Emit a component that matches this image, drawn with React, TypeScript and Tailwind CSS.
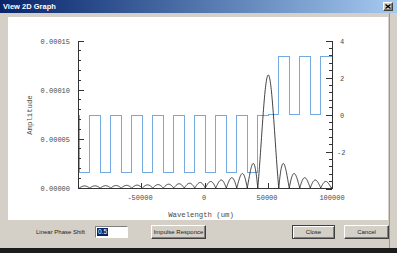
import React from "react";

// chart coords are the screenshot's pixel coords; the svg viewBox starts at the panel's corner
const X0 = 78;
const X1 = 332;
const Y_TOP = 41;
const Y_BASE = 188;

const bluePath = () => {
  const levelY = (s: number) => {
    if (s >= 18) return s % 2 === 0 ? 114 : 56;
    return s % 2 === 0 ? 172 : 115;
  };
  let d = `M ${X0} ${levelY(-1)}`;
  for (let k = 0; k <= 23; k++) {
    const x = 79 + 10.5 * k;
    d += ` L ${x} ${levelY(k - 1)} L ${x} ${levelY(k)}`;
  }
  d += ` L ${X1} ${levelY(23)}`;
  return d;
};

const sincPath = () => {
  const pts: string[] = [];
  for (let x = X0 + 0.5; x <= X1; x += 0.25) {
    const u = (x - 268.25) / 10.5;
    const s = Math.abs(u) < 1e-6 ? 1 : Math.sin(Math.PI * u) / (Math.PI * u);
    const y = Y_BASE - 113 * Math.abs(s);
    pts.push(`${x.toFixed(2)} ${y.toFixed(2)}`);
  }
  return "M " + pts.join(" L ");
};

const leftTicks = () => {
  const out: React.ReactNode[] = [];
  for (let i = 0; i <= 15; i++) {
    const y = Y_BASE - i * 9.8;
    const major = i % 5 === 0;
    out.push(
      <line key={"l" + i} x1={X0} x2={X0 + (major ? 6 : 3)} y1={y} y2={y} stroke="#333" strokeWidth={1} />
    );
  }
  return out;
};

const rightTicks = () => {
  const out: React.ReactNode[] = [];
  for (let i = 0; i <= 20; i++) {
    const y = 189 - i * 7.4;
    const major = i % 5 === 0;
    out.push(
      <line key={"r" + i} x1={X1} x2={X1 - (major ? 6 : 3)} y1={y} y2={y} stroke="#333" strokeWidth={1} />
    );
  }
  return out;
};

const bottomTicks = () => {
  const out: React.ReactNode[] = [];
  for (let i = 0; i <= 4; i++) {
    const x = X0 + i * 63.5;
    out.push(<line key={"b" + i} x1={x} x2={x} y1={Y_BASE} y2={Y_BASE - 5} stroke="#333" strokeWidth={1} />);
  }
  return out;
};

function Chart() {
  const mono = { fontFamily: "'Liberation Mono', 'DejaVu Sans Mono', monospace" };
  return (
    <svg width={380} height={203} viewBox="8 17 380 203" className="block" shapeRendering="crispEdges">
      <g style={mono} fontSize={7} fill="#4a4a4a">
        <text x={70} y={43.5} textAnchor="end">0.00015</text>
        <text x={70} y={92.5} textAnchor="end">0.00010</text>
        <text x={70} y={141.5} textAnchor="end">0.00005</text>
        <text x={70} y={190.5} textAnchor="end">0.00000</text>

        <text x={340} y={43.5}>4</text>
        <text x={340} y={80.5}>2</text>
        <text x={340} y={117.5}>0</text>
        <text x={337} y={154.5}>-2</text>

        <text x={140} y={199.5} textAnchor="middle">-50000</text>
        <text x={204} y={199.5} textAnchor="middle">0</text>
        <text x={267} y={199.5} textAnchor="middle">50000</text>
        <text x={332} y={199.5} textAnchor="middle">100000</text>

        <text x={201} y={216.5} textAnchor="middle" fontSize={7.3}>Wavelength (um)</text>
        <text x={0} y={0} textAnchor="middle" fontSize={7.3} transform="translate(32 115) rotate(-90)">
          Amplitude
        </text>
      </g>

      <path d={bluePath()} fill="none" stroke="#74aae0" strokeWidth={1} />
      <path d={sincPath()} fill="none" stroke="#111" strokeWidth={0.8} shapeRendering="geometricPrecision" />

      <line x1={X0} x2={X0} y1={Y_TOP} y2={Y_BASE} stroke="#333" />
      <line x1={X1} x2={X1} y1={Y_TOP} y2={189} stroke="#333" />
      <line x1={X0} x2={X1} y1={Y_BASE} y2={Y_BASE} stroke="#333" />
      {leftTicks()}
      {rightTicks()}
      {bottomTicks()}
    </svg>
  );
}

const raised =
  "bg-[#d4d0c8] border border-t-white border-l-white border-r-[#404040] border-b-[#404040] shadow-[inset_-1px_-1px_0_#808080]";

export default function App() {
  const ui = { fontFamily: "'Liberation Sans', Arial, sans-serif" };
  return (
    <div className="w-[397px] h-[253px] flex flex-col bg-[#d4d0c8] overflow-hidden" style={ui}>
      <div className="h-[13px] flex items-center justify-between pl-[3px] pr-[4px] bg-gradient-to-r from-[#0a246a] to-[#a6caf0]">
        <span className="text-white font-bold text-[7.5px] leading-none">View 2D Graph</span>
        <div className={"w-[10px] h-[9px] flex items-center justify-center " + raised}>
          <svg width={6} height={5} viewBox="0 0 6 5">
            <path d="M0.5 0.5 L5.5 4.5 M5.5 0.5 L0.5 4.5" stroke="#000" strokeWidth={1.3} />
          </svg>
        </div>
      </div>

      <div className="flex flex-1">
        <div className="w-[390px] flex flex-col border-r border-[#9c9890]">
          <div className="pl-[8px] pt-[4px]">
            <div className="w-[380px] h-[203px] bg-white">
              <Chart />
            </div>
          </div>

          <div className="mt-[5px] h-[14px] flex items-center text-[6px] text-[#222]">
            <span className="ml-[36px] w-[59px]">Linear Phase Shift</span>
            <div className="w-[33px] h-[12px] bg-white border border-t-[#808080] border-l-[#808080] border-r-white border-b-white flex items-center pl-[1px]">
              <span className="bg-[#0a246a] text-white text-[6.5px] leading-none px-[1px] py-[1px]">0.5</span>
            </div>
            <button className={"ml-[23px] w-[55px] h-[14px] flex items-center justify-center text-[6px] " + raised}>
              Impulse Responce
            </button>
            <button className="ml-[86px] w-[43px] h-[14px] flex items-center justify-center text-[6px] bg-[#d4d0c8] border border-[#404040] shadow-[inset_1px_1px_0_white,inset_-1px_-1px_0_#808080]">
              Close
            </button>
            <button className={"ml-[9px] w-[45px] h-[14px] flex items-center justify-center text-[6px] " + raised}>
              Cancel
            </button>
          </div>
        </div>
        <div className="flex-1" />
      </div>

      <div className="h-[5px] bg-[#1c1c1c]" />
    </div>
  );
}
